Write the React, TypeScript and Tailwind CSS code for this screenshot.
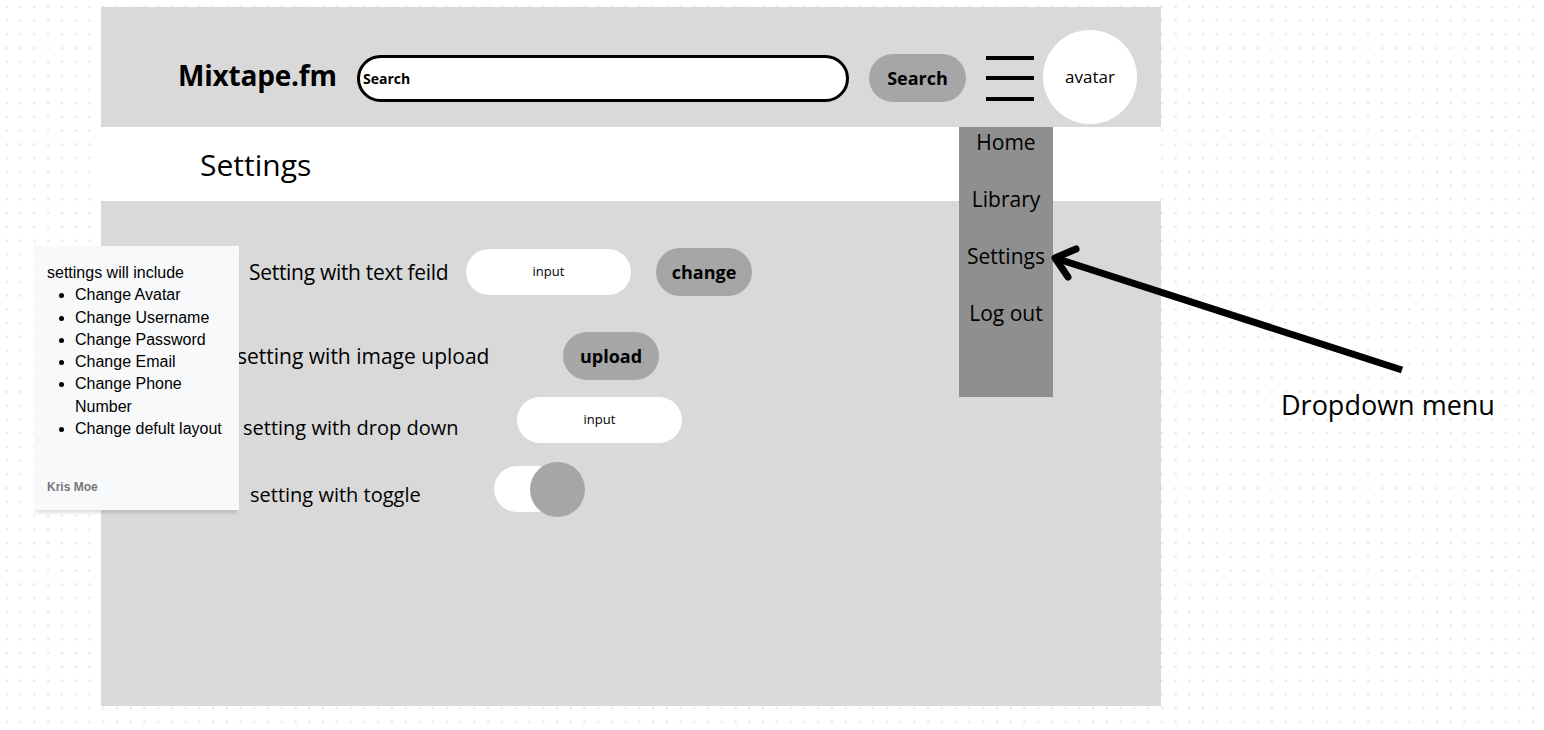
import { ReactNode } from 'react';

const sans = "font-['Open_Sans',sans-serif]";

function Pill({ children, className }: { children: ReactNode; className?: string }) {
  return (
    <div className={`flex items-center justify-center rounded-full ${className ?? ''}`}>
      {children}
    </div>
  );
}

function Header() {
  return (
    <div className="relative flex h-[120px] items-center bg-[#d9d9d9] pt-[22px]">
      <div className="w-[256px] pl-[77px] pb-[6px] text-[28px] font-bold tracking-[-0.2px] text-black">
        Mixtape.fm
      </div>
      <div className="flex h-[47px] w-[492px] items-center rounded-full border-[3px] border-black bg-white pl-[3px] text-[14px] font-bold text-black">
        Search
      </div>
      <Pill className="ml-[20px] h-[48px] w-[97px] bg-[#a6a6a6] text-[18px] font-bold text-black">
        Search
      </Pill>
      <div className="ml-[20px] flex h-[45px] w-[48px] flex-col justify-between">
        <span className="h-[4px] w-full bg-black" />
        <span className="h-[4px] w-full bg-black" />
        <span className="h-[4px] w-full bg-black" />
      </div>
      <Pill className="ml-[9px] mb-[3px] h-[94px] w-[94px] bg-white text-[17px] text-black">
        avatar
      </Pill>

      {/* dropdown menu hanging under the hamburger */}
      <div className="absolute left-[858px] top-[120px] z-10 flex h-[270px] w-[94px] flex-col items-center gap-[27px] bg-[#8f8f8f] text-[21px] leading-[30px] text-black">
        <span>Home</span>
        <span>Library</span>
        <span>Settings</span>
        <span>Log out</span>
      </div>
    </div>
  );
}

function SettingsBody() {
  return (
    <div className="flex h-[505px] flex-col bg-[#d9d9d9] pt-[47px] text-[20px] text-black">
      <div className="flex h-[48px] items-center pl-[148px]">
        <span className="mt-[2px] w-[217px] text-[21px] tracking-[-0.3px]">Setting with text feild</span>
        <Pill className="h-[46px] w-[165px] bg-white text-[13px]">input</Pill>
        <Pill className="ml-[25px] h-[48px] w-[96px] bg-[#a6a6a6] text-[18px] font-bold">change</Pill>
      </div>

      <div className="mt-[36px] flex h-[48px] items-center pl-[136px]">
        <span className="mt-[2px] w-[326px] text-[21px]">setting with image upload</span>
        <Pill className="h-[48px] w-[96px] bg-[#a6a6a6] text-[18px] font-bold">upload</Pill>
      </div>

      <div className="mt-[17px] flex h-[46px] items-center pl-[142px]">
        <span className="mt-[16px] w-[274px]">setting with drop down</span>
        <Pill className="h-[46px] w-[165px] bg-white text-[13px]">input</Pill>
      </div>

      <div className="mt-[19px] flex h-[56px] items-center pl-[149px]">
        <span className="mt-[10px] w-[244px]">setting with toggle</span>
        <div className="relative h-[56px] w-[91px]">
          <span className="absolute left-0 top-[4px] h-[46px] w-[66px] rounded-full bg-white" />
          <span className="absolute right-0 top-0 h-[55px] w-[55px] rounded-full bg-[#a6a6a6]" />
        </div>
      </div>
    </div>
  );
}

function StickyNote() {
  return (
    <div className="absolute left-[34px] top-[246px] z-20 h-[264px] w-[205px] bg-[#f8f9fb] px-[13px] pt-[16px] font-['Liberation_Sans',Arial,sans-serif] text-[16px] leading-[22.3px] text-black shadow-[0_5px_3px_-2px_rgba(0,0,0,0.12)]">
      <div>settings will include</div>
      <ul className="list-disc pl-[28px]">
        <li>Change Avatar</li>
        <li>Change Username</li>
        <li>Change Password</li>
        <li>Change Email</li>
        <li>Change Phone Number</li>
        <li>Change defult layout</li>
      </ul>
      <div className="mt-[36px] text-[12px] font-bold text-[#777]">Kris Moe</div>
    </div>
  );
}

export default function App() {
  return (
    <div
      className={`relative h-[730px] w-[1544px] overflow-hidden bg-white bg-[radial-gradient(circle,#e7e8ee_1.4px,transparent_1.6px)] bg-[length:13.76px_13.76px] ${sans}`}
    >
      <div className="ml-[101px] pt-[7px] w-[1060px]">
        <Header />
        <div className="flex h-[74px] items-center bg-white pl-[99px] text-[30px] text-black">Settings</div>
        <SettingsBody />
      </div>

      <StickyNote />

      {/* annotation arrow pointing at the dropdown */}
      <svg className="pointer-events-none absolute inset-0 z-30" width="1544" height="730">
        <line x1="1402" y1="370" x2="1058" y2="259" stroke="black" strokeWidth="7" />
        <polyline
          points="1076,249 1055,258 1068,277"
          fill="none"
          stroke="black"
          strokeWidth="7"
          strokeLinecap="round"
          strokeLinejoin="round"
        />
      </svg>

      <div className="absolute left-[1281px] top-[387px] text-[27px] leading-[36px] text-black">Dropdown menu</div>
    </div>
  );
}
